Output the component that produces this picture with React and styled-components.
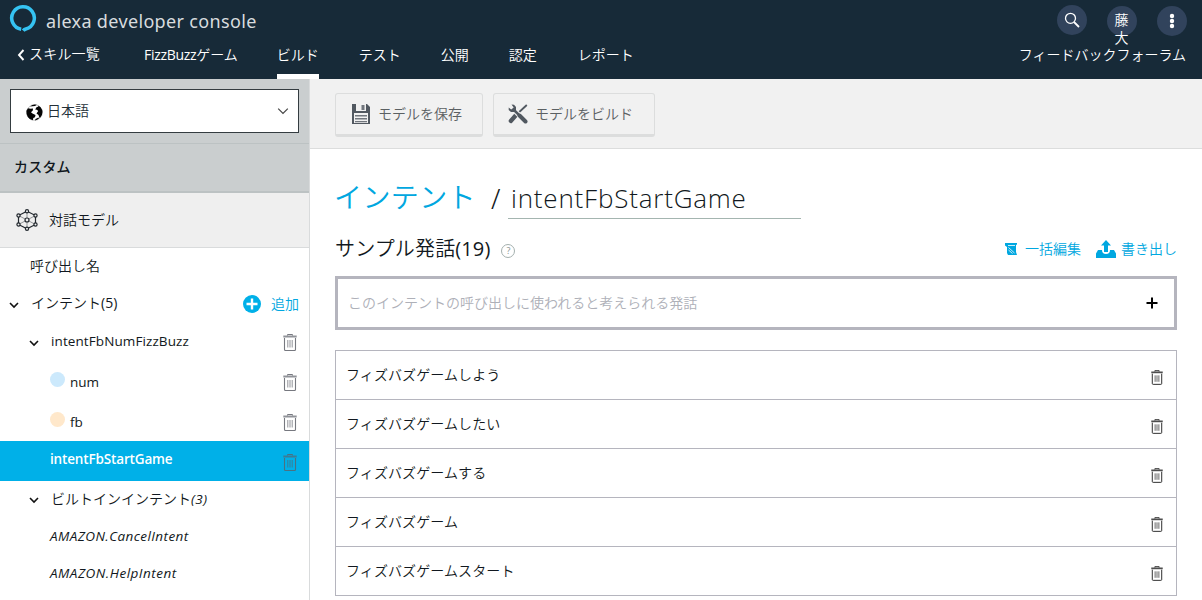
import React from "react";
import styled, { createGlobalStyle } from "styled-components";

const Global = createGlobalStyle`
  * { box-sizing: border-box; }
  html, body { margin: 0; padding: 0; }
  body {
    width: 1202px; height: 600px; overflow: hidden; background: #fff; color: #111820;
    font: 350 14px/20px "Open Sans", "Noto Sans CJK JP", sans-serif;
  }
  svg { display: block; flex: none; }
`;

const Page = styled.div`display: flex; flex-direction: column; height: 600px;`;
const Latin = styled.span`font-weight: 400; letter-spacing: ${(p) => p.$ls || 0}px;`;
const Header = styled.header`height: 79px; flex: none; background: #172a38; color: #fff;`;
const Brand = styled.div`
  display: flex; align-items: center; height: 41px; padding: 0 15px 0 9px;
`;
const Logo = styled.svg`margin-top: -5px;`;
const BrandName = styled.span`
  margin-left: 9px; font-size: 18px; line-height: 24px; color: #d8dcdf; font-weight: 400;
  letter-spacing: 0.34px; font-family: "Noto Sans", sans-serif;
`;
const Actions = styled.div`display: flex; gap: 20px; margin-left: auto;`;
const Round = styled.div`
  width: 30px; height: 30px; border-radius: 50%; background: #31435c; margin-top: ${(p) => p.$drop || 0}px;
  display: flex; justify-content: center; align-items: ${(p) => (p.$top ? "flex-start" : "center")};
`;
const Initials = styled.span`
  width: 15px; padding-top: 5px; line-height: 18px; word-break: break-all; position: relative; z-index: 1;
`;
const Nav = styled.nav`display: flex; height: 38px; padding: 0 16px 0 17px;`;
const NavItem = styled.span`
  display: flex; align-items: flex-start; height: 38px; padding-top: 4px; white-space: nowrap;
  margin-left: ${(p) => p.$gap || 0}px;
  border-bottom: ${(p) => (p.$active ? "5px solid #fff" : "0")};
  svg { margin: 5px 4px 0 0; }
`;
const NavEnd = styled(NavItem)`margin-left: auto;`;
const BackItem = styled(NavItem)`padding-top: 3px; letter-spacing: 0.2px;`;

const Body = styled.div`display: flex; flex: 1; min-height: 0;`;
const Sidebar = styled.aside`width: 310px; flex: none; border-right: 1px solid #d9dbdc; background: #fff;`;
const Locale = styled.div`height: 65px; padding: 10px 10px 0; background: #cacecf; border-bottom: 1px solid #bcc2c3;`;
const Select = styled.div`
  display: flex; align-items: center; height: 44px; padding: 0 9px 0 15px; background: #fff;
  border: 1px solid #343c40; color: #232f38;
  span { margin-left: 4px; flex: 1; }
  svg:first-child { margin-top: 3px; }
`;
const Section = styled.div`
  height: 49px; padding: 13px 14px 0; background: #cacecf; border-bottom: 2px solid #bcc2c3; font-weight: 500;
  letter-spacing: 0.2px;
`;
const Model = styled.div`
  display: flex; align-items: center; height: 55px; padding-left: 16px; background: #efefef;
  border-bottom: 1px solid #d9dbdc;
  span { margin-left: 11px; }
`;
const Row = styled.div`
  display: flex; align-items: center; height: ${(p) => p.$h}px; padding: 0 12px 0 ${(p) => p.$pad}px;
  background: ${(p) => (p.$active ? "#00b0e8" : "transparent")};
  color: ${(p) => (p.$active ? "#fff" : "inherit")};
  svg { margin-top: 2px; }
`;
const Label = styled.span`
  flex: 1; white-space: nowrap; margin-left: ${(p) => p.$ml || 0}px; margin-top: ${(p) => p.$up || 0}px;
`;
const NameLabel = styled(Label)`
  font-size: 13.5px; font-weight: ${(p) => (p.$bold ? 600 : 400)}; letter-spacing: ${(p) => p.$ls || 0}px;
`;
const Italic = styled.i`font-size: 13.5px; font-weight: 400; letter-spacing: ${(p) => p.$ls || 0}px;`;
const Dot = styled.span`width: 15px; height: 15px; margin: 0 5px 4px 0; border-radius: 50%; background: ${(p) => p.$c};`;
const Add = styled.span`
  display: flex; align-items: center; gap: 10px; color: #00a7e0; margin-right: -2px;
  svg { margin-top: 1px; }
`;

const Main = styled.main`flex: 1; min-width: 0;`;
const Toolbar = styled.div`
  display: flex; gap: 10px; height: 70px; padding: 14px 0 0 25px; background: #f1f1f1; border-bottom: 1px solid #dcdddd;
`;
const Button = styled.div`
  display: flex; align-items: center; width: ${(p) => p.$w}px; height: 44px; padding: 0 0 1px ${(p) => p.$pad}px;
  border: 1px solid #dcdddd; border-bottom-width: 3px; border-radius: 3px; color: #5b6063;
  span { margin-left: 7px; }
`;
const Content = styled.div`padding: 0 25px;`;
const Title = styled.div`
  display: flex; align-items: flex-start; height: 70px; padding-top: 28px; font-size: 28px; line-height: 41px; font-weight: 300;
`;
const Crumb = styled.span`
  width: 141px; color: #00a7e0; white-space: nowrap; line-height: 40px; font-weight: 350; letter-spacing: 0.4px; margin-left: -1px;
`;
const Slash = styled.span`
  width: 33px; padding-left: 16px; font-size: 27px; line-height: 44px; font-family: "Noto Sans", sans-serif; font-weight: 300;
`;
const Name = styled.span`
  width: 293px; height: 42px; padding-left: 3px; border-bottom: 1px solid #a4b5b0; line-height: 42px;
  font-size: 26px; letter-spacing: 0.8px; white-space: nowrap;
`;
const Samples = styled.div`display: flex; align-items: center; height: 57px; padding-top: 5px;`;
const Heading = styled.h2`
  margin: 0 11px 3px 0; font-size: 20px; line-height: 30px; font-weight: 350; white-space: nowrap; letter-spacing: 0.15px;
`;
const Help = styled.span`
  width: 14px; height: 14px; border: 1px solid #a4b0ae; border-radius: 50%; color: #87918f; font-weight: 400;
  font-size: 9px; line-height: 12px; text-align: center; margin-top: 1px;
`;
const Link = styled.span`
  display: flex; align-items: center; gap: ${(p) => p.$gap}px; margin-left: ${(p) => p.$ml}; color: #00a7e0; padding-bottom: 2px;
`;
const Entry = styled.div`
  display: flex; align-items: center; justify-content: space-between; height: 54px; padding: 0 16px 0 10px;
  border: 3px solid #b5b5be; color: #aeb0b8;
`;
const List = styled.div`margin-top: 20px; border: 1px solid #b5b5be; border-bottom: 0;`;
const Utterance = styled.div`
  display: flex; align-items: center; justify-content: space-between; height: 49px; padding: 0 13px 0 10px;
  border-bottom: 1px solid #b5b5be; letter-spacing: 0.1px;
  svg { margin-top: 5px; }
`;

const Chevron = ({ s = 10, w = 1.6, c = "#111" }) => (
  <svg width={s} height={s} viewBox="0 0 10 10" fill="none" stroke={c} strokeWidth={w}>
    <path d="M1 3l4 4 4-4" />
  </svg>
);
const Trash = ({ w = 14, h = 17, c = "#76787f" }) => (
  <svg width={w} height={h} viewBox="0 0 14 17" fill="none" stroke={c}>
    <path d="M4.5 1.5V.5h5v1" />
    <path d="M.3 2.5h13.4" strokeWidth="2" opacity=".8" />
    <path d="M1.5 4v11.5q0 1 1 1h9q1 0 1-1V4" strokeWidth="1.1" />
    <path d="M4.8 6v7.5M7 6v7.5M9.2 6v7.5" strokeWidth="1" opacity=".8" />
  </svg>
);
const Globe = () => (
  <svg width="17" height="17" viewBox="0 0 17 17">
    <circle cx="8.5" cy="8.5" r="7.800" fill="#fff" stroke="#999" strokeWidth=".6" />
    <path d="M.4 6.800L2 4.300 4.500 4.800 7 4.500 6.800 6.500 5 8.200 6.500 9.500 9.500 11 9 13.200 7.300 14 6.800 16.300Q3.500 15.600 1.800 13 .1 10.500.4 6.800z" fill="#050505" />
    <path d="M9.200 5.500L10.500 3.200 12.500 2.500 11.500 1.300Q15 2.500 16.200 6 17.200 10 14.500 13.300L13.500 14 12.500 11 10.500 9.500 12.200 7 10.800 5.800z" fill="#050505" />
    <path d="M4 2.500Q7-.2 10.800.8L9 2 6.500 2.300zM9.500 15L12.500 13.500 13 14.600Q11.200 16.200 9 16.400z" fill="#050505" />
  </svg>
);
const Mesh = () => {
  const pts = [[11, 2.2], [19.5, 6.5], [19.5, 15.5], [11, 19.8], [2.5, 15.5], [2.5, 6.5]];
  return (
    <svg width="22" height="22" viewBox="0 0 22 22" fill="none" stroke="#22282e">
      <path d="M11 2.200l8.500 4.300v9L11 19.800l-8.500-4.300v-9z" strokeWidth="1.200" />
      <path d="M11 2.200v17.600M2.500 6.500l17 9M19.500 6.500l-17 9" strokeWidth=".7" opacity=".65" />
      {pts.map(([x, y]) => <circle key={`${x}-${y}`} cx={x} cy={y} r="1.600" fill="#efefef" strokeWidth="1.200" />)}
      <circle cx="11" cy="11" r="2" fill="#efefef" strokeWidth="1.200" />
    </svg>
  );
};

const utterances = ["フィズバズゲームしよう", "フィズバズゲームしたい", "フィズバズゲームする", "フィズバズゲーム", "フィズバズゲームスタート"];

export default function App() {
  return (
    <Page>
      <Global />
      <Header>
        <Brand>
          <Logo width="28" height="28" viewBox="0 0 28 28">
            <path d="M12.200 25.200A11.300 11.300 0 1 1 16.800 25q-1.600.4-2.600 1.600" fill="none" stroke="#35c3f2" strokeWidth="3.500" />
          </Logo>
          <BrandName>alexa developer console</BrandName>
          <Actions>
            <Round>
              <svg width="16" height="16" viewBox="0 0 16 16" fill="none" stroke="#fff" strokeWidth="1.300">
                <circle cx="6.500" cy="6.300" r="5" /><path d="M10 10l5 5" strokeWidth="1.800" />
              </svg>
            </Round>
            <Round $drop={1} $top><Initials>藤大</Initials></Round>
            <Round $drop={1}>
              <svg width="6" height="16" viewBox="0 0 6 16" fill="#fff">
                <circle cx="3" cy="3" r="2.200" /><circle cx="3" cy="8" r="2.200" /><circle cx="3" cy="13" r="2.200" />
              </svg>
            </Round>
          </Actions>
        </Brand>
        <Nav>
          <BackItem>
            <svg width="8" height="12" viewBox="0 0 8 12" fill="none" stroke="#fff" strokeWidth="1.900"><path d="M6.500 1L2 6l4.500 5" /></svg>
            スキル一覧
          </BackItem>
          <NavItem $gap={44}><Latin $ls={-0.3}>FizzBuzz</Latin>ゲーム</NavItem>
          <NavItem $gap={39} $active>ビルド</NavItem>
          <NavItem $gap={40}>テスト</NavItem>
          <NavItem $gap={40}>公開</NavItem>
          <NavItem $gap={40}>認定</NavItem>
          <NavItem $gap={41}>レポート</NavItem>
          <NavEnd>フィードバックフォーラム</NavEnd>
        </Nav>
      </Header>
      <Body>
        <Sidebar>
          <Locale>
            <Select><Globe /><span>日本語</span><Chevron s={12} w={1} c="#444" /></Select>
          </Locale>
          <Section>カスタム</Section>
          <Model><Mesh /><span>対話モデル</span></Model>
          <Row $h={37} $pad={30}><Label $up={-2}>呼び出し名</Label></Row>
          <Row $h={37} $pad={9}>
            <Chevron /><Label $ml={12} $up={-1}>インテント<Latin>(5)</Latin></Label>
            <Add>
              <svg width="18" height="18" viewBox="0 0 18 18"><circle cx="9" cy="9" r="9" fill="#00b0e8" /><path d="M9 3.500v11M3.500 9h11" stroke="#fff" strokeWidth="2.400" /></svg>
              追加
            </Add>
          </Row>
          <Row $h={39} $pad={29}><Chevron /><NameLabel $ml={12} $ls={0.1} $up={-2}>intentFbNumFizzBuzz</NameLabel><Trash /></Row>
          <Row $h={41} $pad={50}><Dot $c="#cce9fc" /><NameLabel>num</NameLabel><Trash /></Row>
          <Row $h={39} $pad={50}><Dot $c="#ffe8cb" /><NameLabel>fb</NameLabel><Trash /></Row>
          <Row $h={40} $pad={50} $active><NameLabel $bold $ls={-0.15} $up={-4}>intentFbStartGame</NameLabel><Trash c="#4a7182" /></Row>
          <Row $h={36} $pad={29}><Chevron /><Label $ml={12}>ビルトインインテント<Italic $ls={0.5}>(3)</Italic></Label></Row>
          <Row $h={37} $pad={50}><Label><Italic $ls={0.42}>AMAZON.CancelIntent</Italic></Label></Row>
          <Row $h={37} $pad={50}><Label><Italic $ls={0.5}>AMAZON.HelpIntent</Italic></Label></Row>
        </Sidebar>
        <Main>
          <Toolbar>
            <Button $w={148} $pad={15}>
              <svg width="20" height="20" viewBox="0 0 20 20" fill="#515860">
                <path d="M1 0h15l3 3v17H1z" /><path d="M5 0h10v7H5zM3 9h14v10H3z" fill="#f1f1f1" />
                <path d="M10.500 1h3v5h-3zM4 11h12v1.500H4zM4 14h12v1.500H4zM4 17h12v1.200H4z" opacity=".8" />
              </svg>
              <span>モデルを保存</span>
            </Button>
            <Button $w={162} $pad={14}>
              <svg width="20" height="20" viewBox="0 0 20 20">
                <path d="M18.800 1L8 11" stroke="#515860" strokeWidth="1.800" /><path d="M8.500 10.500L2.800 17" stroke="#515860" strokeWidth="4.200" strokeLinecap="round" />
                <path d="M5 5l13 13" stroke="#f1f1f1" strokeWidth="5" />
                <path d="M5 5l6 6" stroke="#515860" strokeWidth="2.500" /><path d="M11.500 11.500l6 6" stroke="#515860" strokeWidth="4" strokeLinecap="round" />
                <path d="M3.500.6L6 .7 8 3v3.200L6.200 8H3L.7 6V3.400l2.500 2.200 2.500-2z" fill="#515860" />
              </svg>
              <span>モデルをビルド</span>
            </Button>
          </Toolbar>
          <Content>
            <Title><Crumb>インテント</Crumb><Slash>/</Slash><Name>intentFbStartGame</Name></Title>
            <Samples>
              <Heading>サンプル発話<Latin $ls={0.1}>(19)</Latin></Heading>
              <Help>?</Help>
              <Link $gap={7} $ml="auto">
                <svg width="14" height="14" viewBox="0 0 14 14" fill="#00a7e0"><path d="M1 1h12v1.500l-1 .5v7l1 3H4L3 11V5L1 3.500z" /><path d="M4 3.500h7M4.500 5.500l6 5.500M4.500 8l4 3.500" stroke="#fff" strokeWidth=".8" /></svg>
                一括編集
              </Link>
              <Link $gap={5} $ml="15px">
                <svg width="20" height="18" viewBox="0 0 20 18" fill="#00a7e0"><path d="M10 0l5 5.500h-3V12H8V5.500H5zM2 10h4q0 4 4 4t4-4h4l2 3.500V18H0v-4.500z" /></svg>
                書き出し
              </Link>
            </Samples>
            <Entry>
              <span>このインテントの呼び出しに使われると考えられる発話</span>
              <svg width="12" height="12" viewBox="0 0 12 12" stroke="#000" strokeWidth="2"><path d="M6 .5v11M.5 6h11" /></svg>
            </Entry>
            <List>
              {utterances.map((u) => <Utterance key={u}>{u}<Trash w={12} h={15} c="#222" /></Utterance>)}
            </List>
          </Content>
        </Main>
      </Body>
    </Page>
  );
}
